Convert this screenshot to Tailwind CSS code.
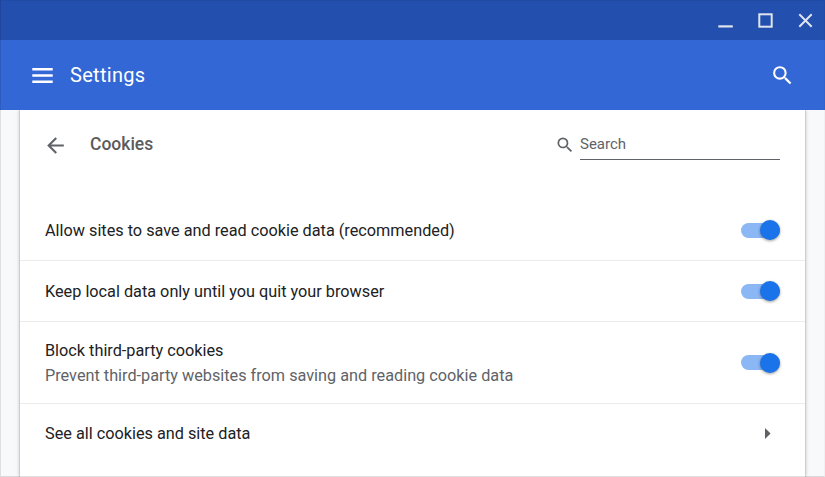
<!DOCTYPE html>
<html lang="en">
<head>
<meta charset="utf-8">
<title>Settings</title>
<script src="https://cdn.jsdelivr.net/npm/@tailwindcss/browser@4"></script>
</head>
<body class="bg-[#f8f9fb]">
<div class="relative flex h-[477px] w-[825px] flex-col overflow-hidden font-['Roboto',sans-serif] text-[16.25px] text-[#202124]">
  <div class="flex h-10 shrink-0 justify-end bg-[#234fae]">
    <svg class="h-10 w-[120px]" viewBox="0 0 120 40" fill="none" stroke="#dfe4ee">
      <path d="M13.3 26.4H27.8" stroke-width="2.2"/>
      <rect x="54.3" y="14.3" width="12.4" height="12.4" stroke-width="2"/>
      <path d="M94.3 14.3L106.7 26.7M106.7 14.3L94.3 26.7" stroke-width="2"/>
    </svg>
  </div>
  <header class="flex h-[70px] shrink-0 items-center bg-[#3367d6] pr-[30px] pl-8 text-white">
    <svg class="h-[16px] w-[21px]" viewBox="0 0 21 16" fill="currentColor"><path d="M.3.9h20.4v2.5H.3zM.3 7.2h20.4v2.5H.3zM.3 13.4h20.4v2.5H.3z"/></svg>
    <h1 class="ml-[17px] grow text-[20px] tracking-[0.3px]">Settings</h1>
    <svg class="h-[25px] w-[25px]" viewBox="0 0 24 24" fill="currentColor"><path d="M15.5 14h-.79l-.28-.27A6.471 6.471 0 0 0 16 9.5 6.5 6.5 0 1 0 9.5 16c1.61 0 3.09-.59 4.23-1.57l.27.28v.79l5 4.99L20.49 19l-4.99-5zm-6 0C7.01 14 5 11.99 5 9.5S7.01 5 9.5 5 14 7.01 14 9.5 11.99 14 9.5 14z"/></svg>
  </header>
  <div class="grow overflow-hidden px-5">
    <main class="h-full bg-white shadow-[0_0_4px_rgba(0,0,0,0.3),0_0_1px_rgba(0,0,0,0.35)]">
      <div class="flex h-[90px] items-start pr-[25px] pl-[23px] text-[#5f6368]">
        <svg class="mt-[23px] h-[25px] w-[25px]" viewBox="0 0 24 24" fill="currentColor"><path d="M20 11H7.83l5.59-5.59L12 4l-8 8 8 8 1.41-1.41L7.83 13H20z"/></svg>
        <h2 class="mt-[22px] ml-[22px] grow text-[17.5px] leading-6 font-medium text-[#5b5b5d]">Cookies</h2>
        <svg class="mt-[25px] mr-[5px] h-[20px] w-[20px]" viewBox="0 0 24 24" fill="currentColor"><path d="M15.5 14h-.79l-.28-.27A6.471 6.471 0 0 0 16 9.5 6.5 6.5 0 1 0 9.5 16c1.61 0 3.09-.59 4.23-1.57l.27.28v.79l5 4.99L20.49 19l-4.99-5zm-6 0C7.01 14 5 11.99 5 9.5S7.01 5 9.5 5 14 7.01 14 9.5 11.99 14 9.5 14z"/></svg>
        <div class="mt-[18px] h-8 w-[200px] border-b border-[#5f6368] text-[15px] leading-8">Search</div>
      </div>
      <div class="flex h-[61px] items-center justify-between border-b border-[#ebebec] pr-[25px] pl-[25px]">
        <span class="pt-0.5">Allow sites to save and read cookie data (recommended)</span>
        <span class="flex h-[15px] w-[39px] items-center justify-end rounded-full bg-[#8cb7f5]"><span class="h-5 w-5 shrink-0 rounded-full bg-[#1a73e8] shadow-[0_1px_3px_rgba(0,0,0,0.4)]"></span></span>
      </div>
      <div class="flex h-[61px] items-center justify-between border-b border-[#ebebec] pr-[25px] pl-[25px]">
        <span class="pt-0.5">Keep local data only until you quit your browser</span>
        <span class="flex h-[15px] w-[39px] items-center justify-end rounded-full bg-[#8cb7f5]"><span class="h-5 w-5 shrink-0 rounded-full bg-[#1a73e8] shadow-[0_1px_3px_rgba(0,0,0,0.4)]"></span></span>
      </div>
      <div class="flex h-[82px] items-center justify-between border-b border-[#ebebec] pr-[25px] pl-[25px]">
        <div class="leading-[25px]">
          <div>Block third-party cookies</div>
          <div class="text-[#5f6368]">Prevent third-party websites from saving and reading cookie data</div>
        </div>
        <span class="flex h-[15px] w-[39px] items-center justify-end rounded-full bg-[#8cb7f5]"><span class="h-5 w-5 shrink-0 rounded-full bg-[#1a73e8] shadow-[0_1px_3px_rgba(0,0,0,0.4)]"></span></span>
      </div>
      <div class="flex h-[60px] items-center justify-between pr-[34px] pl-[25px]">
        <span>See all cookies and site data</span>
        <svg class="mb-px h-[11px] w-[6px]" viewBox="0 0 6 11" fill="#5f6368"><path d="M0 0l5.6 5.5L0 11z"/></svg>
      </div>
    </main>
  </div>
  <div class="pointer-events-none absolute inset-0 border border-t-black/5 border-r-black/3 border-b-black/12 border-l-black/10"></div>
</div>
</body>
</html>
